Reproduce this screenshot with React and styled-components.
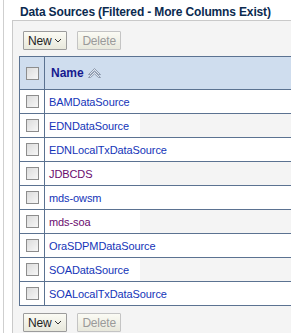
import React from "react";
import styled, { createGlobalStyle } from "styled-components";

const sources = [
  { name: "BAMDataSource" },
  { name: "EDNDataSource" },
  { name: "EDNLocalTxDataSource" },
  { name: "JDBCDS", visited: true },
  { name: "mds-owsm" },
  { name: "mds-soa", visited: true },
  { name: "OraSDPMDataSource" },
  { name: "SOADataSource" },
  { name: "SOALocalTxDataSource" },
];

const GlobalStyle = createGlobalStyle`
  html, body {
    margin: 0;
    padding: 0;
    background: #ffffff;
    overflow: hidden;
  }
  body {
    font-family: "Liberation Sans", Arial, sans-serif;
    font-size: 11px;
  }
`;

const Frame = styled.div`
  margin-left: 3px;
  border-left: 1px solid #cfcfcf;
  height: 333px;
  padding-left: 8px;
`;

const Title = styled.h1`
  margin: 0;
  height: 20px;
  padding-left: 8px;
  font-family: "Liberation Sans", Arial, sans-serif;
  font-size: 12px;
  font-weight: bold;
  letter-spacing: -0.15px;
  line-height: 25px;
  color: #0b2a4f;
  white-space: nowrap;
`;

const Panel = styled.div`
  border-top: 1px solid #c9c9c9;
  border-left: 1px solid #c9c9c9;
  background: #f4f4f4;
  padding: 10px 0 0 6px;
  height: 302px;
`;

const Toolbar = styled.div`
  display: flex;
  gap: 10px;
  padding-left: 4px;
  margin-top: ${(p) => p.$top || 0}px;
`;

const Button = styled.button`
  display: flex;
  align-items: center;
  gap: 3px;
  height: 19px;
  padding: 0 4px;
  font-family: "Liberation Sans", Arial, sans-serif;
  font-size: 12px;
  letter-spacing: -0.2px;
  color: ${(p) => (p.disabled ? "#9a9a9a" : "#1e1e1e")};
  background: linear-gradient(#fbfbf4, #e8e8dc);
  border: 1px solid ${(p) => (p.disabled ? "#c4c4c4" : "#9c9c9c")};
  border-radius: 1px;
`;

const Table = styled.table`
  margin-top: 6px;
  width: calc(100% + 10px);
  border-collapse: collapse;
  table-layout: fixed;
  border-top: 1px solid #5b7291;
  border-left: 1px solid #5b7291;
`;

const HeadCell = styled.th`
  height: 32px;
  padding: 0;
  background: #cfddee;
  border-bottom: 1px solid #5b7291;
  border-right: ${(p) => (p.$divided ? "1px solid #5b7291" : "none")};
  text-align: left;
  font-weight: bold;
  font-size: 12px;
  color: #161a8e;
`;

const Row = styled.tr`
  background: ${(p) => (p.$odd ? "#f4f4f4" : "#ffffff")};
`;

const Cell = styled.td`
  height: 23px;
  padding: 0;
  border-bottom: 1px solid #5b7291;
  border-right: ${(p) => (p.$divided ? "1px solid #5b7291" : "none")};
  background: ${(p) => (p.$white ? "#ffffff" : "transparent")};
  white-space: nowrap;
  overflow: visible;
`;

const Box = styled.span`
  display: block;
  width: 11px;
  height: 11px;
  margin: 0 auto;
  border: 1px solid #8d8d8d;
  background: linear-gradient(135deg, #dcdcdc, #f7f7f7);
`;

const HeadLabel = styled.span`
  display: flex;
  align-items: center;
  gap: 4px;
  padding-left: 6px;
`;

const Link = styled.a`
  position: relative;
  padding-left: 4px;
  font-size: 11px;
  letter-spacing: -0.1px;
  color: ${(p) => (p.$visited ? "#6a0a6e" : "#1434b8")};
  text-decoration: none;
`;

const Chevron = () => (
  <svg width="8" height="5" viewBox="0 0 8 5">
    <path d="M1 1 L4 4 L7 1" fill="none" stroke="#333" strokeWidth="1" />
  </svg>
);

const SortIcon = () => (
  <svg width="13" height="10" viewBox="0 0 13 10">
    <path
      d="M6.5 0.5 L12.5 6.5 L10.5 6.5 L6.5 2.8 L2.5 6.5 L0.5 6.5 Z"
      fill="#dfe6f0"
      stroke="#7d8aa0"
      strokeWidth="0.8"
    />
    <path
      d="M6.5 3.5 L12.5 9.5 L10.5 9.5 L6.5 5.8 L2.5 9.5 L0.5 9.5 Z"
      fill="#dfe6f0"
      stroke="#7d8aa0"
      strokeWidth="0.8"
    />
  </svg>
);

const Actions = ({ top }) => (
  <Toolbar $top={top}>
    <Button>
      New <Chevron />
    </Button>
    <Button disabled>Delete</Button>
  </Toolbar>
);

export default function App() {
  return (
    <Frame>
      <GlobalStyle />
      <Title>Data Sources (Filtered - More Columns Exist)</Title>
      <Panel>
        <Actions />
        <Table>
          <colgroup>
            <col style={{ width: 25 }} />
            <col style={{ width: 95 }} />
            <col />
          </colgroup>
          <thead>
            <tr>
              <HeadCell $divided>
                <Box />
              </HeadCell>
              <HeadCell colSpan={2}>
                <HeadLabel>
                  Name <SortIcon />
                </HeadLabel>
              </HeadCell>
            </tr>
          </thead>
          <tbody>
            {sources.map((s, i) => (
              <Row key={s.name} $odd={i % 2 === 1}>
                <Cell $divided $white>
                  <Box />
                </Cell>
                <Cell $white>
                  <Link href="#" $visited={s.visited}>
                    {s.name}
                  </Link>
                </Cell>
                <Cell />
              </Row>
            ))}
          </tbody>
        </Table>
        <Actions top={7} />
      </Panel>
    </Frame>
  );
}
